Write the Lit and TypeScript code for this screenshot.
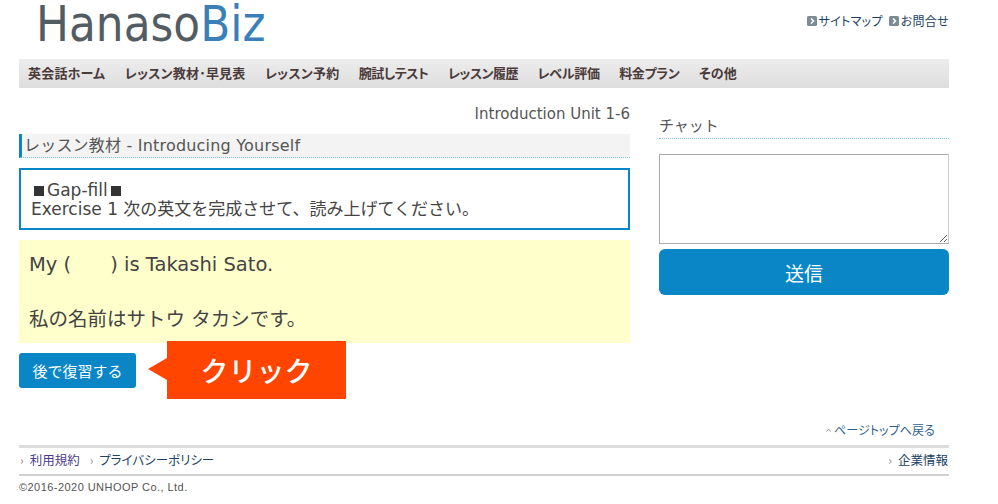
import { LitElement, html, css } from "lit";
import { customElement } from "lit/decorators.js";

@customElement("app-root")
export class AppRoot extends LitElement {
  static styles = css`
    :host { display: block; width: 998px; height: 504px; overflow: hidden; background: #fff; font-family: "DejaVu Sans", "Noto Sans CJK JP", sans-serif; color: #444; }
    * { box-sizing: border-box; }
    .page { width: 930px; margin-left: 19px; display: flex; flex-direction: column; }
    .head { height: 59px; display: flex; justify-content: space-between; align-items: flex-start; }
    .logo { margin-left: 17px; width: 260px; height: 50px; font-family: "DejaVu Sans", sans-serif; font-size: 49px; line-height: 50px; white-space: nowrap; transform: scaleX(0.895); transform-origin: left center; color: #535c63; }
    .logo b { font-weight: 400; color: #3a7fb8; }
    .util { display: flex; gap: 6px; padding-top: 12px; font-size: 12px; line-height: 18px; color: #1c3f63; font-family: "Noto Sans CJK JP", sans-serif; font-feature-settings: "palt"; letter-spacing: 0.3px; }
    .util span { display: flex; align-items: center; gap: 2px; }
    .util svg { width: 10px; height: 10px; }
    nav { height: 29px; padding: 0 0 3px 9px; background: linear-gradient(#ececec, #dedede); display: flex; align-items: center; gap: 19.5px; font-size: 13px; font-weight: 700; color: #4a3a3a; font-family: "Noto Sans CJK JP", sans-serif; font-feature-settings: "palt"; letter-spacing: 0.2px; }
    nav .tight { letter-spacing: -0.5px; }
    nav .snug { letter-spacing: -0.3px; }
    .main { display: flex; justify-content: space-between; height: 357px; }
    .left { width: 611px; padding-top: 17px; display: flex; flex-direction: column; }
    .unit { text-align: right; font-size: 15px; line-height: 18px; height: 29px; color: #555; }
    .title { height: 24px; background: #f3f3f3; border-left: 3px solid #0a86c6; border-bottom: 1px dotted #7fc0dd; padding-left: 2px; font-size: 16px; line-height: 23px; color: #555; white-space: nowrap; letter-spacing: 0.2px; }
    .exercise { margin-top: 10px; height: 62px; border: 2px solid #0a86c6; padding: 11px 10px 0; font-size: 17px; line-height: 19px; color: #444; white-space: nowrap; }
    .exercise .gap { padding-left: 3px; display: flex; align-items: center; gap: 3px; }
    .sq { width: 10px; height: 10px; background: #333; display: inline-block; }
    .yellow { margin-top: 10px; height: 103px; background: #ffffcc; padding: 12px 10px 0; font-size: 19.5px; line-height: 25px; color: #444; }
    .yellow p { margin: 0; }
    .yellow .ja { margin-top: 30px; }
    .action { display: flex; align-items: flex-start; margin-top: -2px; }
    .later { margin-top: 12px; width: 117px; height: 35px; background: #0a86c6; border-radius: 3px; color: #fff; font-size: 15px; display: flex; align-items: center; justify-content: center; font-family: "Noto Sans CJK JP", sans-serif; }
    .callout { display: flex; align-items: center; margin-left: 12px; }
    .tip { width: 0; height: 0; border-style: solid; border-width: 11px 19px 11px 0; border-color: transparent #ff4500 transparent transparent; margin-top: -3px; }
    .box { width: 179px; height: 58px; background: #ff4500; color: #fff; font-size: 28px; font-weight: 500; display: flex; align-items: center; justify-content: center; font-family: "Noto Sans CJK JP", sans-serif; }
    .right { width: 290px; padding-top: 26px; display: flex; flex-direction: column; }
    .chat-title { height: 25px; border-bottom: 1px dotted #7fc0dd; font-size: 15px; line-height: 22px; color: #555; font-family: "Noto Sans CJK JP", sans-serif; }
    textarea { display: block; margin-top: 15px; width: 290px; height: 90px; border: 1px solid #aaa; border-right-color: #ccc; padding: 2px; background: #fff; border-radius: 0; outline: none; }
    .send { margin-top: 5px; height: 46px; background: #0a86c6; border-radius: 6px; color: #fff; font-size: 19px; display: flex; align-items: center; justify-content: center; font-family: "Noto Sans CJK JP", sans-serif; }
    .top-line { display: flex; justify-content: flex-end; padding-right: 14px; height: 0; font-size: 12px; line-height: 18px; color: #2e5f8f; font-family: "Noto Sans CJK JP", sans-serif; font-feature-settings: "palt"; letter-spacing: 0.1px; }
    .top-line span { display: flex; align-items: center; gap: 3px; height: 18px; margin-top: -24px; }
    .top-line svg { width: 5px; height: 4px; }
    .foot { border-top: 3px solid #dcdcdc; border-bottom: 2px solid #d0d0d0; height: 31px; display: flex; justify-content: space-between; align-items: center; font-size: 12.5px; color: #1c3f63; font-family: "Noto Sans CJK JP", sans-serif; padding: 0 1px 3px; font-feature-settings: "palt"; }
    .foot .l { display: flex; gap: 10px; }
    .foot i { font-style: normal; color: #888; margin-right: 6px; font-size: 12px; }
    .foot .v { color: #4b3a8a; }
    .copy { margin-top: 3px; font-size: 11px; line-height: 16px; color: #555; font-family: "Liberation Sans", sans-serif; letter-spacing: 0.45px; }
  `;

  private arrow() {
    return html`<svg viewBox="0 0 10 10"><rect width="10" height="10" rx="1.5" fill="#7d8c94"></rect><path d="M4 2.5 6.5 5 4 7.5" fill="none" stroke="#fff" stroke-width="1.5"></path></svg>`;
  }

  render() {
    return html`
      <div class="page">
        <header class="head">
          <div class="logo">Hanaso<b>Biz</b></div>
          <div class="util">
            <span>${this.arrow()}サイトマップ</span>
            <span>${this.arrow()}お問合せ</span>
          </div>
        </header>
        <nav>
          <span>英会話ホーム</span><span>レッスン教材･早見表</span><span>レッスン予約</span><span class="tight">腕試しテスト</span><span class="tight">レッスン履歴</span><span class="snug">レベル評価</span><span class="snug">料金プラン</span><span>その他</span>
        </nav>
        <div class="main">
          <section class="left">
            <div class="unit">Introduction Unit 1-6</div>
            <div class="title">レッスン教材 - Introducing Yourself</div>
            <div class="exercise">
              <div class="gap"><span class="sq"></span>Gap-fill<span class="sq"></span></div>
              <div>Exercise 1 次の英文を完成させて、読み上げてください。</div>
            </div>
            <div class="yellow">
              <p>My (　　) is Takashi Sato.</p>
              <p class="ja">私の名前はサトウ タカシです。</p>
            </div>
            <div class="action">
              <div class="later">後で復習する</div>
              <div class="callout"><span class="tip"></span><div class="box">クリック</div></div>
            </div>
          </section>
          <aside class="right">
            <div class="chat-title">チャット</div>
            <textarea></textarea>
            <div class="send">送信</div>
          </aside>
        </div>
        <div class="top-line"><span><svg viewBox="0 0 5 4"><path d="M.5 3.5 2.5 1l2 2.5" fill="none" stroke="#7f8f9c" stroke-width="1"></path></svg>ページトップへ戻る</span></div>
        <footer class="foot">
          <div class="l"><span><i>›</i><span class="v">利用規約</span></span><span><i>›</i>プライバシーポリシー</span></div>
          <div><i>›</i>企業情報</div>
        </footer>
        <div class="copy">©2016-2020 UNHOOP Co., Ltd.</div>
      </div>
    `;
  }
}
